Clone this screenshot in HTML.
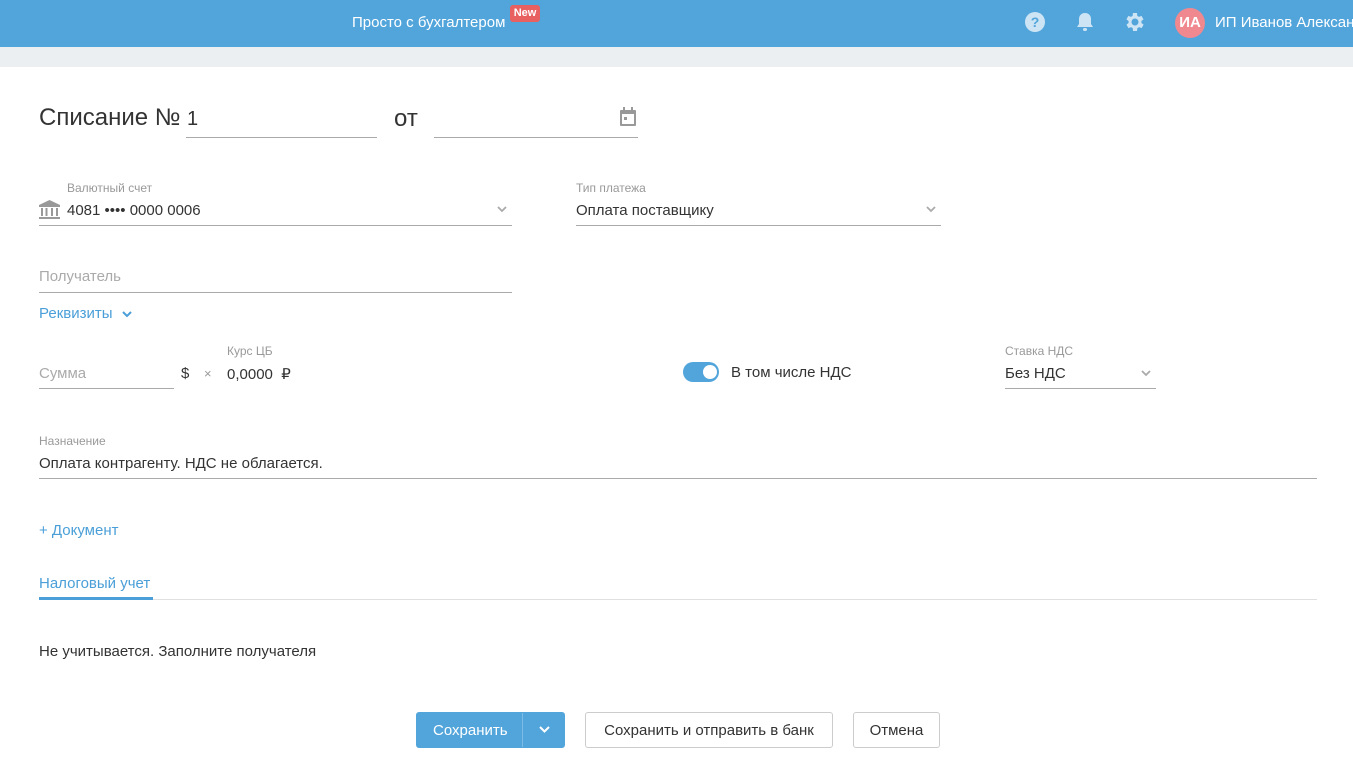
<!DOCTYPE html>
<html><head><meta charset="utf-8"><style>
*{box-sizing:border-box;margin:0;padding:0}
body{width:1353px;height:759px;overflow:hidden;background:#fff;font-family:"Liberation Sans",sans-serif;color:#333;position:relative}
.a{position:absolute;white-space:nowrap}
.hdr{left:0;top:0;width:1353px;height:47px;background:#52a5db}
.band{left:0;top:47px;width:1353px;height:20px;background:#ebeff2}
.ln{position:absolute;height:1px;background:#aaa}
.lbl{font-size:12px;color:#999}
.t{font-size:15px;color:#333}
.ph{font-size:15px;color:#aaa}
.blue{color:#4a9fd8;font-size:15px}
.btn{position:absolute;top:712px;height:36px;border:1px solid #ccc;border-radius:3px;font-size:15px;color:#333;text-align:center;line-height:35px;background:#fff}
</style></head><body>
<div class="a hdr"></div>
<div class="a band"></div>
<div class="a" style="left:352px;top:14px;font-size:15px;color:#fff">Просто с бухгалтером</div>
<div class="a" style="left:510px;top:5px;width:30px;height:17px;background:#e86060;border-radius:3px;color:#fff;font-size:11px;font-weight:bold;text-align:center;line-height:17px">New</div>
<svg class="a" style="left:1024px;top:11px" width="22" height="22" viewBox="0 0 22 22"><circle cx="11" cy="11" r="10" fill="#cde4f5"/><text x="11" y="16" font-size="14" font-weight="bold" fill="#52a5db" text-anchor="middle" font-family="Liberation Sans">?</text></svg>
<svg class="a" style="left:1075px;top:11px" width="20" height="22" viewBox="0 0 20 22"><path d="M10 2c-4 0-6 3-6 6v5l-2 3h16l-2-3V8c0-3-2-6-6-6z" fill="#cde4f5"/><rect x="8" y="17" width="4" height="3" rx="1.5" fill="#cde4f5"/></svg>
<svg class="a" style="left:1123px;top:10px" width="24" height="24" viewBox="0 0 24 24"><path fill="#cde4f5" d="M19.4 13a7.5 7.5 0 000-2l2.1-1.6-2-3.5-2.5 1a7 7 0 00-1.7-1L15 3h-4l-.4 2.9a7 7 0 00-1.7 1l-2.5-1-2 3.5L6.6 11a7.5 7.5 0 000 2l-2.1 1.6 2 3.5 2.5-1a7 7 0 001.7 1L11 21h4l.4-2.9a7 7 0 001.7-1l2.5 1 2-3.5zM13 15.5a3.5 3.5 0 110-7 3.5 3.5 0 010 7z" transform="translate(-1 0)"/></svg>
<div class="a" style="left:1175px;top:8px;width:30px;height:30px;border-radius:50%;background:#f0888f;color:#fff;font-weight:bold;font-size:15px;text-align:center;line-height:30px">ИА</div>
<div class="a" style="left:1215px;top:14px;font-size:15px;color:#fff">ИП Иванов Александр</div>

<div class="a" style="left:39px;top:104px;font-size:24px;color:#333">Списание №</div>
<div class="a" style="left:187px;top:108px;font-size:20px;color:#333">1</div>
<div class="ln" style="left:186px;top:137px;width:191px"></div>
<div class="a" style="left:394px;top:105px;font-size:24px;color:#333">от</div>
<div class="ln" style="left:434px;top:137px;width:204px"></div>
<svg class="a" style="left:619px;top:107px" width="18" height="20" viewBox="0 0 18 20"><rect x="4" y="0" width="2" height="4" fill="#999"/><rect x="12" y="0" width="2" height="4" fill="#999"/><rect x="1" y="3" width="16" height="16" rx="1" fill="#999"/><rect x="3" y="7" width="12" height="10" fill="#fff"/><rect x="5" y="10" width="3" height="3" fill="#999"/></svg>

<div class="a lbl" style="left:67px;top:181px">Валютный счет</div>
<svg class="a" style="left:39px;top:200px" width="21" height="19" viewBox="0 0 21 19"><path d="M10.5 0L0 5v2h21V5z" fill="#999"/><rect x="2" y="8" width="2" height="8" fill="#999"/><rect x="6.5" y="8" width="2" height="8" fill="#999"/><rect x="12" y="8" width="2" height="8" fill="#999"/><rect x="17" y="8" width="2" height="8" fill="#999"/><rect x="0" y="17" width="21" height="2" fill="#999"/></svg>
<div class="a t" style="left:67px;top:202px">4081 •••• 0000 0006</div>
<svg class="a" style="left:497px;top:206px" width="10" height="7" viewBox="0 0 10 7"><path d="M1 1l4 4 4-4" stroke="#aaa" stroke-width="1.8" fill="none"/></svg>
<div class="ln" style="left:39px;top:225px;width:473px"></div>

<div class="a lbl" style="left:576px;top:181px">Тип платежа</div>
<div class="a t" style="left:576px;top:202px">Оплата поставщику</div>
<svg class="a" style="left:926px;top:206px" width="10" height="7" viewBox="0 0 10 7"><path d="M1 1l4 4 4-4" stroke="#aaa" stroke-width="1.8" fill="none"/></svg>
<div class="ln" style="left:576px;top:225px;width:365px"></div>

<div class="a ph" style="left:39px;top:268px">Получатель</div>
<div class="ln" style="left:39px;top:292px;width:473px"></div>
<div class="a blue" style="left:39px;top:305px">Реквизиты</div>
<svg class="a" style="left:122px;top:311px" width="10" height="7" viewBox="0 0 10 7"><path d="M1 1l4 4 4-4" stroke="#4a9fd8" stroke-width="2" fill="none"/></svg>

<div class="a ph" style="left:39px;top:365px">Сумма</div>
<div class="ln" style="left:39px;top:388px;width:135px"></div>
<div class="a t" style="left:181px;top:365px">$</div>
<div class="a" style="left:204px;top:366px;font-size:13px;color:#999">×</div>
<div class="a lbl" style="left:227px;top:344px">Курс ЦБ</div>
<div class="a t" style="left:227px;top:365px">0,0000&nbsp; ₽</div>

<div class="a" style="left:683px;top:362px;width:36px;height:20px;border-radius:10px;background:#52a5db"></div>
<div class="a" style="left:703px;top:365px;width:14px;height:14px;border-radius:50%;background:#fff"></div>
<div class="a t" style="left:731px;top:364px">В том числе НДС</div>

<div class="a lbl" style="left:1005px;top:344px">Ставка НДС</div>
<div class="a t" style="left:1005px;top:365px">Без НДС</div>
<svg class="a" style="left:1141px;top:370px" width="10" height="7" viewBox="0 0 10 7"><path d="M1 1l4 4 4-4" stroke="#aaa" stroke-width="1.8" fill="none"/></svg>
<div class="ln" style="left:1005px;top:388px;width:151px"></div>

<div class="a lbl" style="left:39px;top:434px">Назначение</div>
<div class="a t" style="left:39px;top:455px">Оплата контрагенту. НДС не облагается.</div>
<div class="ln" style="left:39px;top:478px;width:1278px"></div>

<div class="a blue" style="left:39px;top:522px">+ Документ</div>
<div class="a blue" style="left:39px;top:575px">Налоговый учет</div>
<div class="a" style="left:39px;top:599px;width:1278px;height:1px;background:#e0e0e0"></div>
<div class="a" style="left:39px;top:597px;width:114px;height:3px;background:#4a9fd8"></div>

<div class="a t" style="left:39px;top:643px">Не учитывается. Заполните получателя</div>

<div class="btn" style="left:416px;width:149px;background:#52a5db;border-color:#52a5db;color:#fff"><span style="position:absolute;left:16px">Сохранить</span><span style="position:absolute;left:105px;top:0;width:1px;height:34px;background:#7dbce6"></span>
<svg style="position:absolute;left:122px;top:13px" width="11" height="8" viewBox="0 0 11 8"><path d="M1 1l4.5 4.5L10 1" stroke="#fff" stroke-width="2" fill="none"/></svg></div>
<div class="btn" style="left:585px;width:248px">Сохранить и отправить в банк</div>
<div class="btn" style="left:853px;width:87px">Отмена</div>
</body></html>
